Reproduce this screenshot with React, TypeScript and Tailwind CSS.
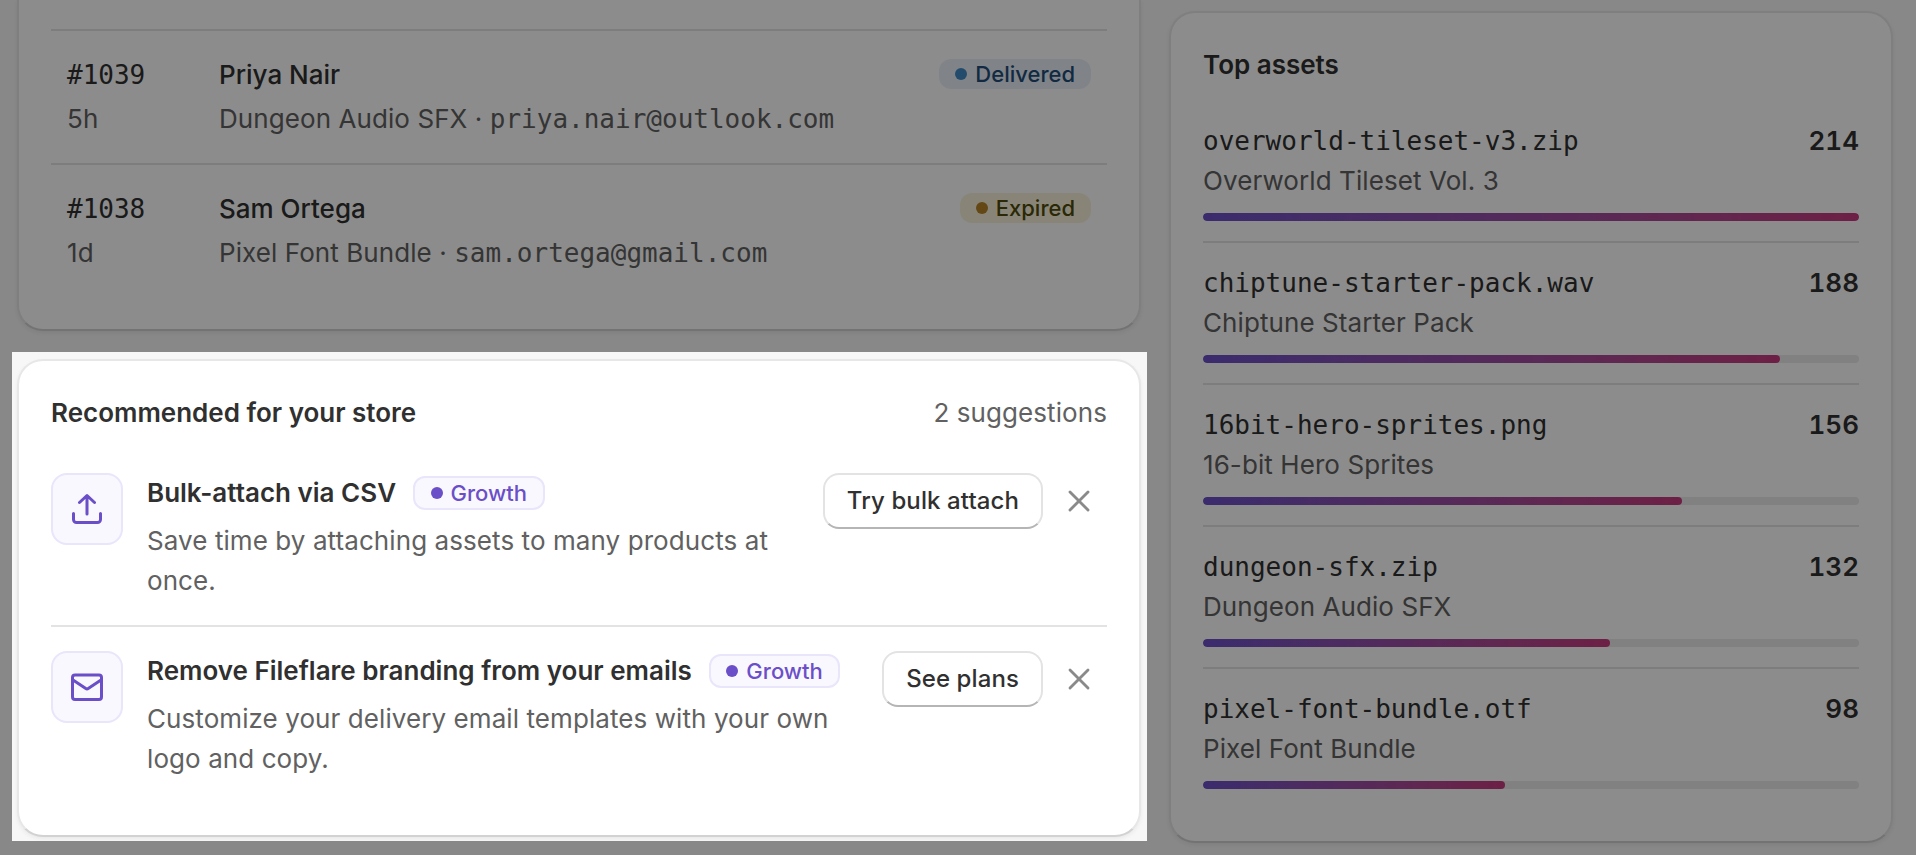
import { X } from 'lucide-react';

type Status = 'delivered' | 'expired';

const ORDERS: { id: string; age: string; name: string; product: string; email: string; status: Status }[] = [
  { id: '#1039', age: '5h', name: 'Priya Nair', product: 'Dungeon Audio SFX', email: 'priya.nair@outlook.com', status: 'delivered' },
  { id: '#1038', age: '1d', name: 'Sam Ortega', product: 'Pixel Font Bundle', email: 'sam.ortega@gmail.com', status: 'expired' },
];

const ASSETS = [
  { file: 'overworld-tileset-v3.zip', title: 'Overworld Tileset Vol. 3', count: 214, pct: 100 },
  { file: 'chiptune-starter-pack.wav', title: 'Chiptune Starter Pack', count: 188, pct: 88 },
  { file: '16bit-hero-sprites.png', title: '16-bit Hero Sprites', count: 156, pct: 73 },
  { file: 'dungeon-sfx.zip', title: 'Dungeon Audio SFX', count: 132, pct: 62 },
  { file: 'pixel-font-bundle.otf', title: 'Pixel Font Bundle', count: 98, pct: 46 },
];

const SUGGESTIONS = [
  { icon: 'upload', title: 'Bulk-attach via CSV', body: 'Save time by attaching assets to many products at once.', action: 'Try bulk attach' },
  { icon: 'mail', title: 'Remove Fileflare branding from your emails', body: 'Customize your delivery email templates with your own logo and copy.', action: 'See plans' },
];

const CARD = 'bg-white border-2 border-[#e7e7e7] border-b-[#d2d2d2] shadow-[0_2px_4px_rgba(0,0,0,0.06)]';
const MONO = "font-['DejaVu_Sans_Mono',monospace] tracking-normal";
const SUBDUED = 'text-[#616161] tracking-[0.08px]';

function StatusBadge({ status }: { status: Status }) {
  const delivered = status === 'delivered';
  return (
    <span
      className={
        'flex h-[30px] items-center gap-[8px] rounded-[12px] px-4 text-[22px] font-medium ' +
        (delivered ? 'bg-[#eaf0fa] text-[#1f4e78]' : 'bg-[#f8f3da] text-[#4f4a0c]')
      }
    >
      <span className={'size-3 rounded-full ' + (delivered ? 'bg-[#4189c4]' : 'bg-[#b58327]')} />
      {delivered ? 'Delivered' : 'Expired'}
    </span>
  );
}

function GrowthBadge() {
  return (
    <span className="flex h-[34px] items-center gap-[8px] rounded-[12px] border-2 border-[#e9e5fb] bg-[#f9f8ff] px-[15.5px] text-[22px] font-medium text-[#6b4fc8]">
      <span className="size-3 rounded-full bg-[#6b4fc8]" />
      Growth
    </span>
  );
}

function SuggestionIcon({ icon }: { icon: string }) {
  return (
    <div className="flex size-[72px] shrink-0 items-center justify-center rounded-2xl border-2 border-[#e9e5fb] bg-[#f9f8ff] text-[#6b4fc8]">
      <svg width="40" height="40" viewBox="0 0 20 20" fill="none" stroke="currentColor" strokeWidth="1.5" strokeLinecap="round" strokeLinejoin="round">
        {icon === 'upload' ? (
          <path d="M10 12.5V3.25M6.25 6.75L10 3.25L13.75 6.75M3.25 12.25v3a1.5 1.5 0 0 0 1.5 1.5h10.5a1.5 1.5 0 0 0 1.5-1.5v-3" />
        ) : (
          <>
            <rect x="2.75" y="4" width="14.5" height="12.25" rx="1.25" />
            <path d="M3 6.5l6.4 4.3a1.1 1.1 0 0 0 1.2 0l6.4-4.3" />
          </>
        )}
      </svg>
    </div>
  );
}

export default function App() {
  return (
    <div className="relative h-[855px] w-[1916px] overflow-hidden bg-[#f7f7f7] font-['Inter',sans-serif] text-[26px] text-[#303030]">
      <div className="flex items-start gap-7 pl-[17px]">
        <div className="w-[1124px]">
          <section className={'h-[331px] rounded-b-[26px] border-t-0 px-8 pt-[29px] ' + CARD}>
            {ORDERS.map((o) => (
              <div key={o.id} className="flex h-[134px] border-t-2 border-[#e3e3e3] px-4 pt-6">
                <div className="w-[152px]">
                  <div className={'h-10 leading-10 ' + MONO}>{o.id}</div>
                  <div className={'mt-1 h-10 leading-10 ' + SUBDUED}>{o.age}</div>
                </div>
                <div className="flex-1">
                  <div className="h-10 leading-10 font-medium">{o.name}</div>
                  <div className={'mt-1 h-10 leading-10 ' + SUBDUED}>
                    {o.product} · <span className={MONO}>{o.email}</span>
                  </div>
                </div>
                <div className="pt-1">
                  <StatusBadge status={o.status} />
                </div>
              </div>
            ))}
          </section>

          <section className={'mt-7 h-[478px] rounded-[26px] px-8 pt-[31px] ' + CARD}>
            <div className="flex h-10 items-center justify-between">
              <h2 className="font-semibold">Recommended for your store</h2>
              <span className={SUBDUED}>2 suggestions</span>
            </div>
            <div className="mt-[41px]">
              {SUGGESTIONS.map((s, i) => (
                <div
                  key={s.title}
                  className={'flex items-start ' + (i > 0 ? 'mt-6 border-t-2 border-[#e3e3e3] pt-6' : '')}
                >
                  <SuggestionIcon icon={s.icon} />
                  <div className="ml-6 flex-1">
                    <div className="flex h-10 items-center gap-[17px]">
                      <h3 className="pb-0.5 font-semibold whitespace-nowrap">{s.title}</h3>
                      <GrowthBadge />
                    </div>
                    <p className={'mt-2 pr-6 leading-10 ' + SUBDUED}>{s.body}</p>
                  </div>
                  <button className="h-14 shrink-0 rounded-2xl border-2 border-[#e3e3e3] border-b-[#b5b5b5] px-[22px] text-[24px] font-medium tracking-[0.1px] whitespace-nowrap">
                    {s.action}
                  </button>
                  <button className="ml-2 flex size-14 items-center justify-center text-[#8a8a8a]">
                    <X size={36} strokeWidth={1.9} />
                  </button>
                </div>
              ))}
            </div>
          </section>
        </div>

        <section className={'mt-[11px] h-[832px] w-[724px] rounded-[26px] px-8 pt-8 ' + CARD}>
          <h2 className="h-10 leading-10 font-semibold">Top assets</h2>
          <div className="mt-4">
            {ASSETS.map((a, i) => (
              <div key={a.file} className={'py-5 ' + (i > 0 ? 'border-t-2 border-[#e3e3e3]' : '')}>
                <div className="flex h-10 items-center justify-between">
                  <span className={MONO}>{a.file}</span>
                  <span className="pb-0.5 font-semibold tabular-nums">{a.count}</span>
                </div>
                <div className={'h-10 leading-10 ' + SUBDUED}>{a.title}</div>
                <div className="mt-3 h-2 overflow-hidden rounded-full bg-[#ebebeb]">
                  <div
                    className="h-full rounded-full bg-linear-to-r from-[#6b4fc8] to-[#c83a7e]"
                    style={{ width: `${a.pct}%` }}
                  />
                </div>
              </div>
            ))}
          </div>
        </section>
      </div>

      {/* tour spotlight, dims everything outside the highlighted card */}
      <div className="pointer-events-none absolute top-[352px] left-[12px] h-[489px] w-[1135px] shadow-[0_0_0_2000px_rgba(0,0,0,0.45)]" />
    </div>
  );
}
